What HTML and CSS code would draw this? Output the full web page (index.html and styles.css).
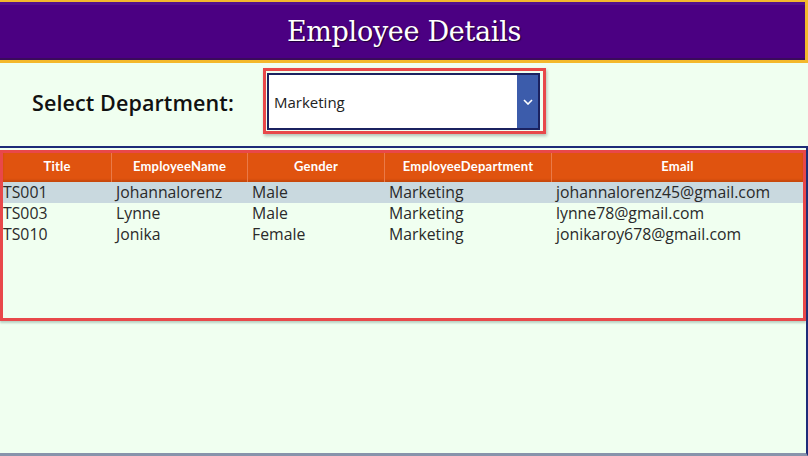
FILE: index.html
```html
<!DOCTYPE html>
<html>
<head>
<meta charset="utf-8">
<link rel="stylesheet" href="styles.css">
</head>
<body>
<div class="page">
  <header class="topbar"><h1 class="title">Employee Details</h1></header>
  <section class="filter">
    <span class="label">Select Department:</span>
    <div class="highlight">
      <div class="dropdown">
        <span class="value">Marketing</span>
        <span class="arrow">
          <svg width="10" height="6" viewBox="0 0 10 6"><path d="M1 1 L5 5 L9 1" fill="none" stroke="#fff" stroke-width="1.6"/></svg>
        </span>
      </div>
    </div>
  </section>
  <section class="gallery">
    <div class="tablebox">
      <div class="row head">
        <div class="c c1">Title</div>
        <div class="c c2">EmployeeName</div>
        <div class="c c3">Gender</div>
        <div class="c c4">EmployeeDepartment</div>
        <div class="c c5">Email</div>
      </div>
      <div class="row data sel">
        <div class="c c1">TS001</div>
        <div class="c c2">Johannalorenz</div>
        <div class="c c3">Male</div>
        <div class="c c4">Marketing</div>
        <div class="c c5">johannalorenz45@gmail.com</div>
      </div>
      <div class="row data">
        <div class="c c1">TS003</div>
        <div class="c c2">Lynne</div>
        <div class="c c3">Male</div>
        <div class="c c4">Marketing</div>
        <div class="c c5">lynne78@gmail.com</div>
      </div>
      <div class="row data">
        <div class="c c1">TS010</div>
        <div class="c c2">Jonika</div>
        <div class="c c3">Female</div>
        <div class="c c4">Marketing</div>
        <div class="c c5">jonikaroy678@gmail.com</div>
      </div>
    </div>
  </section>
</div>
</body>
</html>
```
FILE: styles.css
```css
html, body { margin: 0; padding: 0; }
body { width: 808px; height: 456px; overflow: hidden; background: #f0fff0; font-family: "Open Sans", "Noto Sans", sans-serif; }
.page { width: 808px; height: 456px; display: flex; flex-direction: column; }
.topbar {
  height: 58px; background: #4b0082;
  border-top: 2px solid #f4b82c; border-bottom: 3px solid #f4b82c; border-right: 3px solid #f4b82c;
  box-shadow: inset 0 -2px 0 #3a0a5c, inset 0 3px 0 #53108c;
  display: flex; align-items: center; justify-content: center;
}
.title {
  margin: 0; font-family: "DejaVu Serif", serif; font-weight: normal; font-size: 27px; color: #fff;
  text-shadow: 1px 1px 1px #1d0036; letter-spacing: -0.3px; padding-left: 3px;
}
.filter { height: 83px; display: flex; align-items: flex-start; padding-top: 5px; box-sizing: border-box; }
.label { margin-left: 32px; margin-top: 20px; font-size: 21.5px; font-weight: 600; color: #111; width: 231px; flex: none; letter-spacing: 0.1px; }
.highlight { border: 3px solid #e8484a; padding: 2px 3px 1px 1px; box-shadow: 1px 2px 3px rgba(0,0,0,0.25); }
.dropdown { width: 269px; height: 53px; border: 2px solid #1b2260; background: #fff; display: flex; align-items: stretch; }
.value { flex: 1; display: flex; align-items: center; padding-left: 5px; font-size: 15px; color: #222; }
.arrow { width: 21px; background: #3c5cab; display: flex; align-items: center; justify-content: center; }
.gallery { flex: 1; border-top: 2px solid #1d2b78; border-right: 2px solid #1d2b78; border-bottom: 3px solid #8893ab; padding-top: 2px; }
.tablebox { height: 165px; border: 3px solid #e8484a; box-shadow: 0 2px 2px rgba(60,100,90,0.3); }
.row { display: flex; }
.head { height: 29px; background: #e0530f; box-shadow: inset 0 -2px 2px rgba(120,40,0,0.25); }
.head .c { color: #fff; font-family: "Lato", sans-serif; font-size: 13px; font-weight: bold; text-align: center; line-height: 27px; border-right: 1px solid #ea7a48; letter-spacing: 0.2px; }
.head .c5 { border-right: none; }
.data { height: 21px; }
.data .c { font-size: 15.8px; color: #2a2a2a; line-height: 21px; padding-left: 4px; white-space: nowrap; box-sizing: border-box; }
.data .c1 { padding-left: 0; }
.sel { background: #c9d9df; }
.c5 { flex: 1; }
.data .c1 { width: 109px; }
.data .c2 { width: 136px; }
.data .c3 { width: 137px; }
.data .c4 { width: 167px; }
.head .c1 { width: 108px; }
.head .c2 { width: 135px; }
.head .c3 { width: 136px; }
.head .c4 { width: 166px; }
```
